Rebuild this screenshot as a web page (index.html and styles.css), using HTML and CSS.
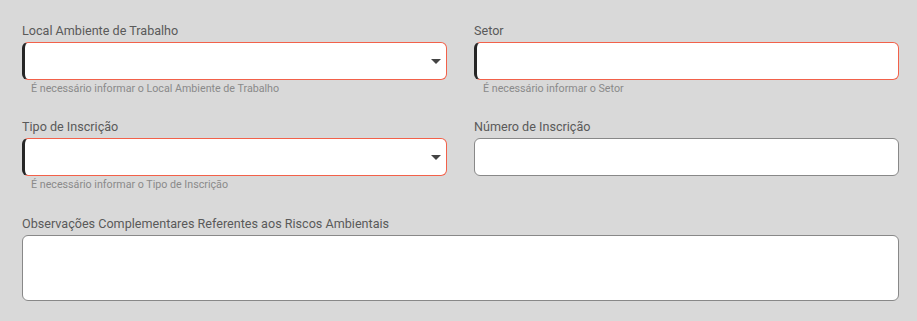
FILE: index.html
```html
<!DOCTYPE html>
<html>
    <head>
        <title>Ambiente de Trabalho</title>
        <link rel="stylesheet" href="styles.css">
    </head>

    <body>
        <form class="riskForm" onsubmit="return false;">
            <div class="field">
                <label for="localAmbiente">Local Ambiente de Trabalho</label>
                <div class="control invalid select" id="localAmbiente">
                    <span class="caret"></span>
                </div>
                <p class="helper">É necessário informar o Local Ambiente de Trabalho</p>
            </div>

            <div class="field">
                <label for="setor">Setor</label>
                <div class="control invalid" id="setor"></div>
                <p class="helper">É necessário informar o Setor</p>
            </div>

            <div class="field">
                <label for="tipoInscricao">Tipo de Inscrição</label>
                <div class="control invalid select" id="tipoInscricao">
                    <span class="caret"></span>
                </div>
                <p class="helper">É necessário informar o Tipo de Inscrição</p>
            </div>

            <div class="field">
                <label for="numeroInscricao">Número de Inscrição</label>
                <div class="control" id="numeroInscricao"></div>
                <p class="helper"></p>
            </div>

            <div class="field wide">
                <label for="observacoes">Observações Complementares Referentes aos Riscos Ambientais</label>
                <div class="control area" id="observacoes"></div>
            </div>
        </form>
    </body>
</html>
```

FILE: styles.css
```css
body {
    margin: 0;
    background-color: #d9d9d9;
    font-family: Roboto, "Liberation Sans", Arial, sans-serif;
}

.riskForm {
    display: grid;
    grid-template-columns: 1fr 1fr;
    column-gap: 27px;
    row-gap: 23px;
    padding: 23px 18px 0 22px;
}

.field {
    display: flex;
    flex-direction: column;
}

.field.wide {
    grid-column: 1 / span 2;
    margin-top: 1px;
}

label {
    font-size: 12.6px;
    line-height: 16px;
    color: #5a5a5a;
    margin-bottom: 3px;
}

.control {
    box-sizing: border-box;
    height: 38px;
    background-color: #ffffff;
    border: 1px solid #888888;
    border-radius: 6px;
}

.control.invalid {
    border-color: #f2614a;
    border-left: 3px solid #262626;
}

.control.select {
    display: flex;
    align-items: center;
    justify-content: flex-end;
    padding-right: 5px;
}

.control.area {
    height: 66px;
}

.caret {
    width: 0;
    height: 0;
    border-left: 5px solid transparent;
    border-right: 5px solid transparent;
    border-top: 5px solid #444444;
}

.helper {
    margin: 2px 0 0 0;
    padding-left: 9px;
    min-height: 14px;
    font-size: 10.7px;
    line-height: 14px;
    color: #8a8a8a;
}
```
